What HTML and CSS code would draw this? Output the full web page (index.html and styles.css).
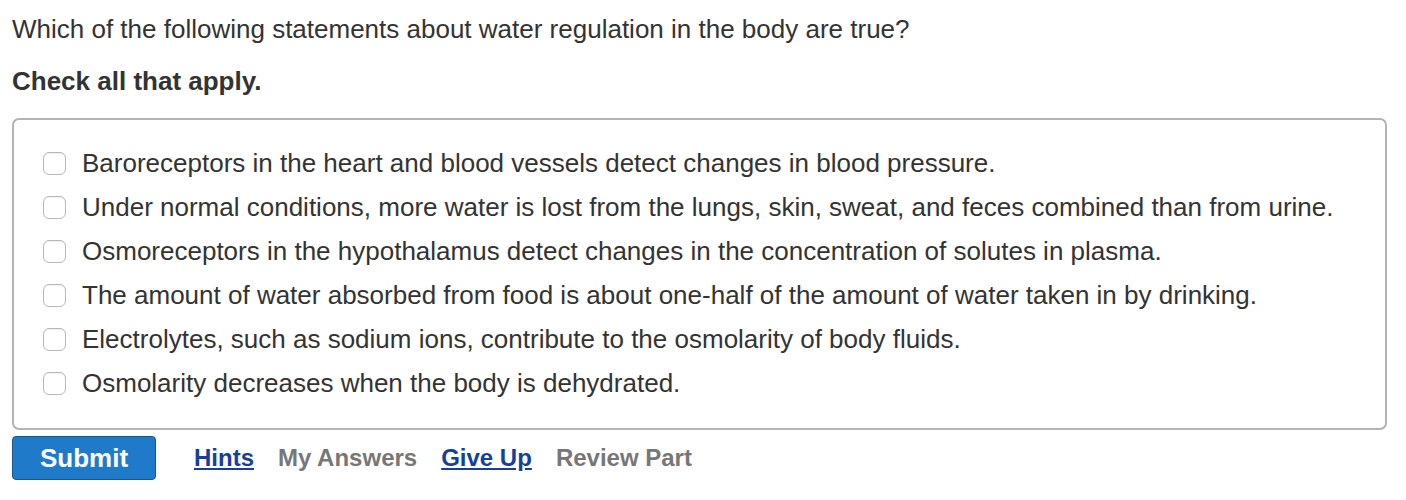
FILE: index.html
```html
<!DOCTYPE html>
<html lang="en">
<head>
<meta charset="utf-8">
<title>Water regulation</title>
<link rel="stylesheet" href="styles.css">
</head>
<body>
<div class="question">
  <p class="prompt">Which of the following statements about water regulation in the body are true?</p>
  <p class="instruction">Check all that apply.</p>
  <div class="choices">
    <label class="choice"><span class="box"></span><span>Baroreceptors in the heart and blood vessels detect changes in blood pressure.</span></label>
    <label class="choice"><span class="box"></span><span>Under normal conditions, more water is lost from the lungs, skin, sweat, and feces combined than from urine.</span></label>
    <label class="choice"><span class="box"></span><span>Osmoreceptors in the hypothalamus detect changes in the concentration of solutes in plasma.</span></label>
    <label class="choice"><span class="box"></span><span>The amount of water absorbed from food is about one-half of the amount of water taken in by drinking.</span></label>
    <label class="choice"><span class="box"></span><span>Electrolytes, such as sodium ions, contribute to the osmolarity of body fluids.</span></label>
    <label class="choice"><span class="box"></span><span>Osmolarity decreases when the body is dehydrated.</span></label>
  </div>
  <div class="actions">
    <button class="submit" type="button">Submit</button>
    <a class="link" href="#">Hints</a>
    <span class="muted">My Answers</span>
    <a class="link" href="#">Give Up</a>
    <span class="muted">Review Part</span>
  </div>
</div>
</body>
</html>
```
FILE: styles.css
```css
body {
  margin: 0;
  background: #fff;
  font-family: "Liberation Sans", Arial, sans-serif;
  color: #333;
}

.question {
  padding: 14px 19px 0 12px;
}

.prompt {
  margin: 0;
  font-size: 26px;
  line-height: 30px;
}

.instruction {
  margin: 22px 0 0;
  font-size: 26px;
  line-height: 30px;
  font-weight: bold;
}

.choices {
  margin-top: 22px;
  border: 2px solid #b3b3b3;
  border-radius: 7px;
  padding: 28px 0 30px 29px;
  display: flex;
  flex-direction: column;
  gap: 14px;
}

.choice {
  display: flex;
  align-items: center;
  gap: 16px;
  font-size: 26px;
  line-height: 30px;
}

.box {
  width: 23px;
  height: 23px;
  border: 1px solid #b8b8b8;
  border-radius: 6px;
  box-sizing: border-box;
  flex: none;
  background: #fff;
  box-shadow: inset 0 1px 1px rgba(0, 0, 0, 0.06);
}

.actions {
  margin-top: 6px;
  display: flex;
  align-items: center;
  gap: 24px;
}

.submit {
  width: 144px;
  height: 44px;
  background: #1f7bc9;
  border: 1px solid #18578c;
  border-radius: 4px;
  color: #fff;
  font-family: inherit;
  font-size: 26px;
  font-weight: bold;
  margin-right: 14px;
  padding: 0;
}

.link {
  color: #183f98;
  font-size: 24px;
  font-weight: bold;
  text-decoration: underline;
}

.muted {
  color: #777;
  font-size: 24px;
  font-weight: bold;
}
```
